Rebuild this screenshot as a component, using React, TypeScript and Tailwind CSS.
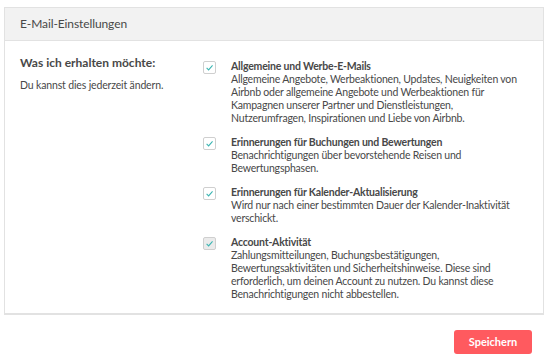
import React from "react";

const items = [
  {
    title: "Allgemeine und Werbe-E-Mails",
    text: "Allgemeine Angebote, Werbeaktionen, Updates, Neuigkeiten von Airbnb oder allgemeine Angebote und Werbeaktionen für Kampagnen unserer Partner und Dienstleistungen, Nutzerumfragen, Inspirationen und Liebe von Airbnb.",
  },
  {
    title: "Erinnerungen für Buchungen und Bewertungen",
    text: "Benachrichtigungen über bevorstehende Reisen und Bewertungsphasen.",
  },
  {
    title: "Erinnerungen für Kalender-Aktualisierung",
    text: "Wird nur nach einer bestimmten Dauer der Kalender-Inaktivität verschickt.",
  },
  {
    title: "Account-Aktivität",
    text: "Zahlungsmitteilungen, Buchungsbestätigungen, Bewertungsaktivitäten und Sicherheitshinweise. Diese sind erforderlich, um deinen Account zu nutzen. Du kannst diese Benachrichtigungen nicht abbestellen.",
    disabled: true,
  },
];

function Check({ disabled }: { disabled?: boolean }) {
  return (
    <div
      className={`w-[13px] h-[13px] mt-[1px] shrink-0 rounded-[2px] border border-[#cfcfcf] flex items-center justify-center ${
        disabled ? "bg-[#ebebeb]" : "bg-white"
      }`}
    >
      <svg width="9" height="9" viewBox="0 0 10 10" fill="none">
        <path d="M1.8 5.4 L4 7.6 L8.4 2.6" stroke="#3ab5b2" strokeWidth="1.2" />
      </svg>
    </div>
  );
}

export default function App() {
  return (
    <div className="w-[550px] h-[361px] bg-white text-[#484848] pt-[7px] pl-[4px]" style={{ fontFamily: "Lato, 'Noto Sans', sans-serif" }}>
      <div className="w-[540px] border border-[#e2e2e2] border-b-2">
        <div className="h-[33px] bg-[#f2f2f2] border-b border-[#e2e2e2] flex items-center px-[15px] text-[12px] tracking-[-0.1px]">
          E-Mail-Einstellungen
        </div>
        <div className="flex pl-[15px] pt-[14px] pb-[12px]">
          <div className="w-[183px] shrink-0">
            <div className="text-[12px] font-bold leading-[16px]">Was ich erhalten möchte:</div>
            <div className="text-[10.5px] tracking-[-0.15px] mt-[7px] leading-[14px]">Du kannst dies jederzeit ändern.</div>
          </div>
          <div className="flex flex-col gap-[11px] pt-[5px]">
            {items.map((it) => (
              <div key={it.title} className="flex gap-[15px]">
                <Check disabled={it.disabled} />
                <div className="w-[293px] text-[10.5px] tracking-[-0.2px] leading-[13px]">
                  <div className="font-bold">{it.title}</div>
                  <div>{it.text}</div>
                </div>
              </div>
            ))}
          </div>
        </div>
      </div>
      <div className="w-[540px] flex justify-end pr-[12px] pt-[15px]">
        <button className="w-[78px] h-[24px] rounded-[3px] bg-[#ff5a5f] text-white text-[11px] font-bold">
          Speichern
        </button>
      </div>
    </div>
  );
}
